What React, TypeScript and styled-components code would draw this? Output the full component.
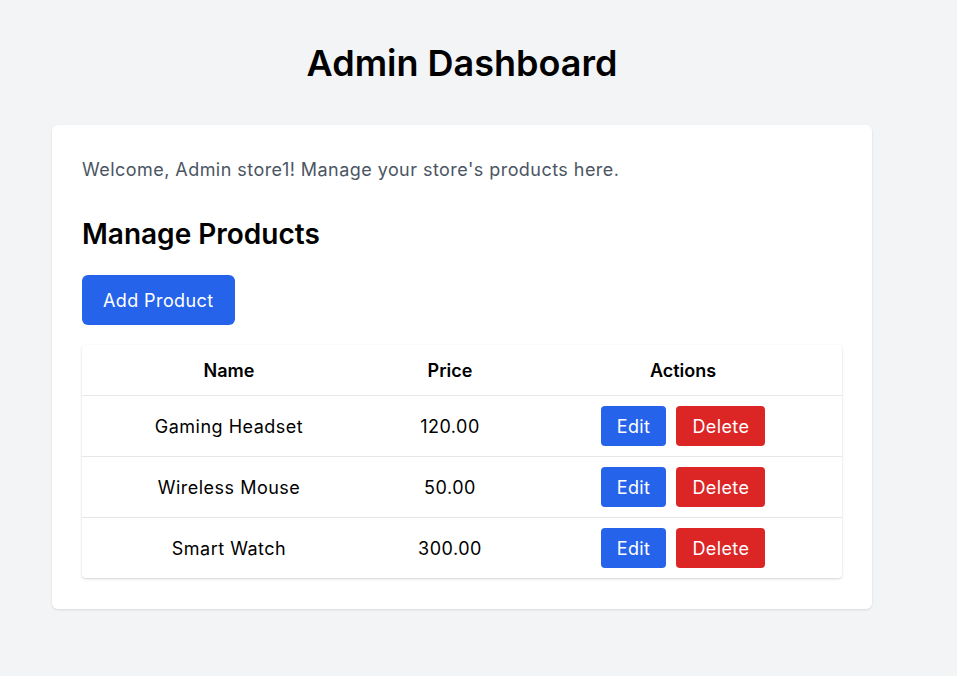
import React from "react";
import styled, { createGlobalStyle } from "styled-components";

const Global = createGlobalStyle`
  html, body { margin: 0; padding: 0; background: #f3f4f6; }
  body { font-family: "Inter", "Liberation Sans", sans-serif; color: #111; }
`;

const Page = styled.div`
  padding: 40px 0 60px 52px;
`;

const Container = styled.div`
  width: 820px;
`;

const Title = styled.h1`
  margin: 0 0 39px;
  text-align: center;
  font-size: 36px;
  font-weight: 600;
  line-height: 46px;
  color: #000;
`;

const Card = styled.div`
  background: #fff;
  border-radius: 6px;
  box-shadow: 0 1px 3px rgba(0,0,0,0.08), 0 1px 2px rgba(0,0,0,0.04);
  padding: 30px 30px 31px;
`;

const Welcome = styled.p`
  margin: 0 0 31px;
  font-size: 18px;
  line-height: 30px;
  letter-spacing: 0.45px;
  color: #4b5563;
`;

const SectionTitle = styled.h2`
  margin: 0 0 23px;
  font-size: 28px;
  font-weight: 600;
  line-height: 36px;
  color: #000;
`;

const Button = styled.button<{ $variant?: "primary" | "danger"; $size?: "lg" | "sm" }>`
  border: none;
  cursor: pointer;
  font-family: inherit;
  font-size: 18px;
  letter-spacing: 0.4px;
  color: #fff;
  background: ${(p) => (p.$variant === "danger" ? "#dc2626" : "#2563eb")};
  border-radius: ${(p) => (p.$size === "sm" ? "4px" : "6px")};
  height: ${(p) => (p.$size === "sm" ? "40px" : "50px")};
  padding: ${(p) => (p.$size === "sm" ? "0 16px" : "0 21px")};
`;

const Table = styled.table`
  margin-top: 20px;
  width: 760px;
  border-collapse: collapse;
  background: #fff;
  border-radius: 4px;
  box-shadow: 0 1px 3px rgba(0,0,0,0.12), 0 1px 2px rgba(0,0,0,0.06);
  overflow: hidden;
`;

const Th = styled.th<{ $w: number }>`
  width: ${(p) => p.$w}px;
  height: 50px;
  padding: 0;
  font-size: 18px;
  font-weight: 600;
  text-align: center;
  color: #000;
`;

const Tr = styled.tr`
  border-top: 1px solid #e5e7eb;
`;

const Td = styled.td`
  height: 60px;
  padding: 0;
  font-size: 18px;
  letter-spacing: 0.5px;
  text-align: center;
  color: #000;
`;

const Actions = styled.div`
  display: flex;
  justify-content: center;
  gap: 10px;
  letter-spacing: 0;
`;

const products = [
  { name: "Gaming Headset", price: "120.00" },
  { name: "Wireless Mouse", price: "50.00" },
  { name: "Smart Watch", price: "300.00" },
];

export default function App() {
  return (
    <Page>
      <Global />
      <Container>
        <Title>Admin Dashboard</Title>
        <Card>
          <Welcome>Welcome, Admin store1! Manage your store's products here.</Welcome>
          <SectionTitle>Manage Products</SectionTitle>
          <Button $variant="primary" $size="lg">Add Product</Button>
          <Table>
            <thead>
              <tr>
                <Th $w={294}>Name</Th>
                <Th $w={148}>Price</Th>
                <Th $w={318}>Actions</Th>
              </tr>
            </thead>
            <tbody>
              {products.map((p) => (
                <Tr key={p.name}>
                  <Td>{p.name}</Td>
                  <Td>{p.price}</Td>
                  <Td>
                    <Actions>
                      <Button $variant="primary" $size="sm">Edit</Button>
                      <Button $variant="danger" $size="sm">Delete</Button>
                    </Actions>
                  </Td>
                </Tr>
              ))}
            </tbody>
          </Table>
        </Card>
      </Container>
    </Page>
  );
}
